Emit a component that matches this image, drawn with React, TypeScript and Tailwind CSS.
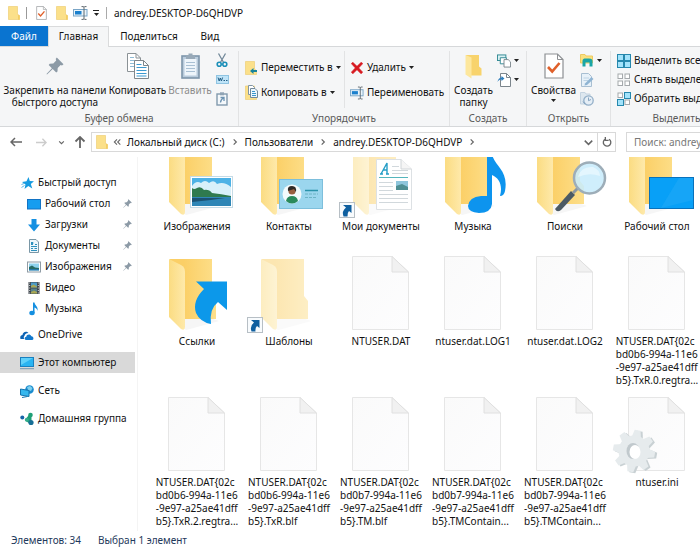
import React from "react";

type Draw = { className?: string };

/* ---------- small icons ---------- */

function MiniFolder({ className }: Draw) {
  return (
    <svg className={className ?? "h-[14px] w-[12px]"} viewBox="0 0 12 14" aria-hidden="true">
      <path d="M0.500 0.500H9.500V8.500L11.500 9.500V13.500H0.500Z" fill="#fbe08a" stroke="#ecc96a" strokeWidth="0.6" />
      <path d="M10 8.500L11.700 9.500V13.700H10Z" fill="#f3cd66" />
    </svg>
  );
}

function CheckDoc({ className }: Draw) {
  return (
    <svg className={className} viewBox="0 0 20 26" aria-hidden="true">
      <path d="M1 1H13.500L19 6.500V25H1Z" fill="#fff" stroke="#8d9093" strokeWidth="1.200" />
      <path d="M13.500 1V6.500H19" fill="none" stroke="#8d9093" />
      <path d="M4 14L8.200 18.500L15.500 10" fill="none" stroke="#e0602a" strokeWidth="2.600" />
    </svg>
  );
}

function RenameIcon({ className }: Draw) {
  return (
    <svg className={className} viewBox="0 0 15 14" aria-hidden="true">
      <rect x="0.500" y="3.500" width="13.500" height="6.500" fill="#e9f4fb" stroke="#7aa5c6" />
      <rect x="2" y="5" width="6.500" height="3.500" fill="#1b80cd" />
      <path d="M8.500 0.600H10.400L11 1.200L11.600 0.600H13.500M11 1V13M8.500 13.400H10.400L11 12.800L11.600 13.400H13.500" fill="none" stroke="#5f686f" />
    </svg>
  );
}

function Pin({ className, color = "#8c9aa6" }: Draw & { color?: string }) {
  return (
    <svg className={className} viewBox="0 0 18 18" aria-hidden="true">
      <path d="M10.800 0.500L17.500 7.200L16 8.400L14.600 7.900L11.700 10.900L11.500 14.600L10.200 15.600L6.700 12.100L1 17.500L0.500 17L5.900 11.300L2.700 8.100L3.700 6.800L7.300 6.500L10.200 3.500L9.700 2Z" fill={color} />
    </svg>
  );
}

function CopyIcon() {
  return (
    <svg className="h-[26px] w-[22px]" viewBox="0 0 22 26" aria-hidden="true">
      <path d="M0.500 0.500H9L13.500 5V18.500H0.500Z" fill="#fff" stroke="#8b9296" />
      <path d="M9 0.500V5H13.500" fill="none" stroke="#8b9296" />
      <path d="M3 4.500H7M3 7.500H11M3 10.500H11M3 13.500H8" fill="none" stroke="#8fbcd6" />
      <path d="M7.500 7.500H16.500L21.500 12.500V25.500H7.500Z" fill="#fff" stroke="#7f878c" />
      <path d="M16.500 7.500V12.500H21.500" fill="none" stroke="#7f878c" />
      <path d="M9.500 11.500H14.500M9.500 14.500H19.500M9.500 17.500H19.500M9.500 20.500H19.500M9.500 23H19.500" stroke="#3d9ad0" />
    </svg>
  );
}

function PasteIcon() {
  return (
    <svg className="h-[26px] w-[19px]" viewBox="0 0 19 26" aria-hidden="true">
      <rect x="1" y="3" width="17" height="22" fill="#b9cbdc" stroke="#7d95ab" strokeWidth="1.600" />
      <rect x="3.500" y="6" width="12" height="16.500" fill="#eef5fb" />
      <path d="M5 9.500H14M5 12.500H14M5 15.500H14M5 18.500H14" stroke="#a9c0d4" />
      <path d="M5 2.500H7.500V0.500H11.500V2.500H14V6H5Z" fill="#98a9b8" />
    </svg>
  );
}

function Scissors() {
  return (
    <svg className="h-[15px] w-[12px]" viewBox="0 0 12 15" aria-hidden="true">
      <path d="M2.500 0.500L7.600 9.500M9.500 0.500L4.400 9.500" stroke="#73899a" strokeWidth="1.300" />
      <circle cx="3.200" cy="11.200" r="2" fill="none" stroke="#1b8fb8" strokeWidth="1.600" />
      <circle cx="8.800" cy="11.200" r="2" fill="none" stroke="#1b8fb8" strokeWidth="1.600" />
    </svg>
  );
}

function CopyPath() {
  return (
    <svg className="h-[9px] w-[13px]" viewBox="0 0 13 9" aria-hidden="true">
      <rect x="0.500" y="0.500" width="12" height="8" fill="#bfe4f8" stroke="#8fc4e2" />
      <path d="M2 2.500L3.200 6L4.300 3L5.400 6L6.600 2.500M7.500 5.500H9M10 5.500H11.500" fill="none" stroke="#245f85" />
    </svg>
  );
}

function PasteShortcut() {
  return (
    <svg className="h-[14px] w-[12px]" viewBox="0 0 12 14" aria-hidden="true">
      <rect x="1" y="2" width="10" height="11" fill="#f4f8fb" stroke="#8199ad" strokeWidth="1.400" />
      <rect x="4" y="0.300" width="4" height="3" fill="#8fa3b4" />
      <path d="M4.500 5.500H8V9M8 5.500C5.500 7 4.500 8.500 4.500 10.500" fill="none" stroke="#6d93b2" strokeWidth="1.300" />
    </svg>
  );
}

function MoveTo() {
  return (
    <svg className="h-[14px] w-[13px]" viewBox="0 0 13 14" aria-hidden="true">
      <path d="M0.500 0.500H9.500V8L11.500 9.500V13.500H0.500Z" fill="#fbe08a" stroke="#ecc96a" strokeWidth="0.600" />
      <path d="M5 10L8.500 7V9H12V11H8.500V13Z" fill="#17849c" />
    </svg>
  );
}

function CopyTo() {
  return (
    <svg className="h-[15px] w-[13px]" viewBox="0 0 13 15" aria-hidden="true">
      <path d="M0.500 1H9.500V10L11.500 11V14.500H0.500Z" fill="#fbe08a" stroke="#ecc96a" strokeWidth="0.600" />
      <path d="M3.500 0.500H7.500L9.500 2.500V9.500H3.500Z" fill="#fff" stroke="#8095a5" />
      <path d="M5.500 3.500H10L12.500 6V12.500H5.500Z" fill="#edf7fd" stroke="#718899" />
      <path d="M7 6.500H10M7 8.500H11M7 10.500H11" stroke="#3b95cb" />
    </svg>
  );
}

function DeleteX() {
  return (
    <svg className="h-[12px] w-[12px]" viewBox="0 0 12 12" aria-hidden="true">
      <path d="M1.800 0.300L6 4.300L10.200 0.300L11.800 1.600L7.700 5.900L11.700 10.200L10 11.800L6 7.700L1.800 11.800L0.300 10.200L4.300 5.900L0.300 1.600Z" fill="#d71920" stroke="#d71920" strokeWidth="0.600" />
    </svg>
  );
}

function NewFolder() {
  return (
    <svg className="h-[25px] w-[18px]" viewBox="0 0 18 25" aria-hidden="true">
      <path d="M1 1H14V12.500L16.500 14.500V21.500H3Z" fill="#f8d36c" />
      <path d="M0.500 1L6.500 3.500V24.500L0.500 20.500Z" fill="#fde79d" />
    </svg>
  );
}

function NewItem() {
  return (
    <svg className="h-[14px] w-[15px]" viewBox="0 0 15 14" aria-hidden="true">
      <rect x="0.500" y="0.500" width="9" height="6" fill="#d9f1f3" stroke="#2f8892" />
      <path d="M3.500 3.500H10V10H3.500Z" fill="#fff" stroke="#2f8892" />
      <path d="M7.500 5.500H12L14.500 8V13.500H7.500Z" fill="#fff" stroke="#7b858c" />
    </svg>
  );
}

function EasyAccess() {
  return (
    <svg className="h-[14px] w-[14px]" viewBox="0 0 14 14" aria-hidden="true">
      <path d="M3.500 0.500H9.500L13.500 4.500V13.500H3.500Z" fill="#fff" stroke="#7b858c" />
      <path d="M9.500 0.500V4.500H13.500" fill="none" stroke="#7b858c" />
      <path d="M0.500 9C1 6.500 2 5 4.500 4.500V3L7.500 5.500L4.500 8V6.500C3 6.500 1.500 7 0.500 9Z" fill="#2e7ebd" />
    </svg>
  );
}

function OpenIcon() {
  return (
    <svg className="h-[13px] w-[14px]" viewBox="0 0 14 13" aria-hidden="true">
      <path d="M0.500 0.500H5L6 2H12.500V9H0.500Z" fill="#fae17f" stroke="#edca62" />
      <path d="M2.500 12.500V7C2.500 5 4 4.500 5.500 4.500H9C11.500 4.500 12.500 5.500 12.500 7V12.500H9.500V8.500H5.500V12.500Z" fill="#19a5a6" />
    </svg>
  );
}

function EditIcon() {
  return (
    <svg className="h-[14px] w-[14px]" viewBox="0 0 14 14" aria-hidden="true">
      <path d="M1.500 0.500H8.500L11.500 3.500V13.500H1.500Z" fill="#e7f1f9" stroke="#a8bfd2" />
      <path d="M3.500 5H9M3.500 7.500H8" stroke="#bdd3e4" />
      <path d="M5 10.500L11.500 4L13.500 6L7 12L4.500 12.500Z" fill="#8fb4d3" />
    </svg>
  );
}

function HistoryIcon() {
  return (
    <svg className="h-[14px] w-[14px]" viewBox="0 0 14 14" aria-hidden="true">
      <path d="M0.500 0.500H5L6 2H10V12H0.500Z" fill="#dde7ef" stroke="#c4d3e0" />
      <circle cx="8.500" cy="8.500" r="4.700" fill="#e5eef6" stroke="#93afc8" strokeWidth="1.300" />
      <path d="M8.500 5.500V8.700L11 7.500M5 12L3 9.500" fill="none" stroke="#86a5c1" />
    </svg>
  );
}

function SelectTiles({ kind }: { kind: "all" | "none" | "invert" }) {
  const cells = [
    [0.5, 0.5],
    [7.5, 0.5],
    [0.5, 7.5],
    [7.5, 7.5],
  ];
  const on = kind === "all" ? [true, true, true, true] : kind === "none" ? [false, false, false, false] : [false, true, true, false];
  return (
    <svg className="h-[14px] w-[14px]" viewBox="0 0 14 14" aria-hidden="true">
      {cells.map(([x, y], i) => (
        <rect
          key={i}
          x={on[i] ? x : x + 0.5}
          y={on[i] ? y : y + 0.5}
          width={on[i] ? 6 : 4.5}
          height={on[i] ? 6 : 4.5}
          fill={on[i] ? "#a3e3fb" : "#fff"}
          stroke={on[i] ? "#2688ad" : "#a5a9ac"}
        />
      ))}
    </svg>
  );
}

function Caret() {
  return (
    <svg className="h-[3px] w-[5px] shrink-0" viewBox="0 0 5 3" aria-hidden="true">
      <path d="M0 0H5L2.500 3Z" fill="#222" />
    </svg>
  );
}

/* ---------- navigation icons ---------- */

function Stroke({ d, color = "#666", w = 1.5, size = "h-3 w-3" }: { d: string; color?: string; w?: number; size?: string }) {
  return (
    <svg className={size} viewBox="0 0 12 12" fill="none" stroke={color} strokeWidth={w} aria-hidden="true">
      <path d={d} />
    </svg>
  );
}

const sideIcons: Record<string, React.ReactNode> = {
  star: (
    <>
      <path d="M8.500 1L9.800 5L14 5.200L10.800 8L12.300 12.500L8.300 10L4.500 13L5.500 8.500L2 6L6.500 5.300Z" fill="#169be0" />
      <path d="M1.500 11.500L4.500 9.500M1.500 8.500L4 7.500" stroke="#5cb9e8" />
    </>
  ),
  desk: <rect x="0.500" y="2.500" width="13" height="9.500" fill="#159df0" stroke="#1273c4" />,
  down: <path d="M4.500 1H9.500V6.500H13L7 13.500L1 6.500H4.500Z" fill="#1590e2" />,
  doc: (
    <>
      <path d="M2.500 0.500H9L11.500 3V13.500H2.500Z" fill="#eef7fb" stroke="#7a97a6" />
      <path d="M4 4H6.500M8 5.500H10M4 7.500H10M4 9.500H6M7.500 9.500H10M4 11.500H10" stroke="#2e90bd" />
      <rect x="4" y="3" width="2" height="3" fill="#2e90bd" />
    </>
  ),
  pic: (
    <>
      <rect x="0.500" y="2" width="13" height="10" fill="#fff" stroke="#8f9ca5" />
      <rect x="2" y="3.500" width="10" height="7" fill="#8ed2ee" />
      <path d="M2 7L5 5.500L8 7.500L12 8V9H2Z" fill="#276b63" />
      <path d="M2 9H12V10.500H2Z" fill="#2679aa" />
    </>
  ),
  video: (
    <>
      <rect x="1.500" y="1" width="11" height="12" fill="#3e454c" />
      <rect x="4" y="1.500" width="6" height="5" fill="#4d9cc7" />
      <rect x="4" y="7.500" width="6" height="5" fill="#56818a" />
      <path d="M4 6.500V5L6.500 3.500L10 5.500V6.500ZM4 12.500V11L7 9.500L10 11V12.500Z" fill="#a9a752" />
      <path d="M2.700 1.500V13M11.300 1.500V13" stroke="#d5dadd" strokeDasharray="1 1.500" />
    </>
  ),
  music: (
    <>
      <path d="M6 0.500H7.500C7.800 3.500 11.500 4.500 10.500 9C10.300 7 9 6 7.500 5.500V11H6Z" fill="#148fe0" />
      <ellipse cx="5" cy="11" rx="2.700" ry="2.200" fill="#148fe0" />
    </>
  ),
  cloud: (
    <>
      <path d="M0.500 11C-0.500 8 1.500 7 2.500 7C2.500 4 6.500 2.500 8.500 5C6 5 4.500 6.500 4.500 8C3.500 8.500 3.500 10.500 4.500 11Z" fill="#0b62b4" />
      <path d="M6 12C4 11.500 4.500 8.800 6.300 8.800C6.500 6 10.500 5.500 11.300 8.300C13.500 8 14.200 11.500 12.300 12Z" fill="#1278cc" />
    </>
  ),
  pc: (
    <>
      <rect x="0.500" y="1.500" width="13" height="9" fill="#29b4f2" stroke="#1a80bf" />
      <path d="M1 2H13L1 9Z" fill="#5fd0fa" />
      <path d="M0 12.700H14" stroke="#7297b0" />
    </>
  ),
  net: (
    <>
      <circle cx="9.500" cy="5.500" r="4.300" fill="#1b8cce" />
      <path d="M7 3L10 2L12.500 4L11 7L8 6Z" fill="#7ed0ef" />
      <path d="M0.500 5L9 6.500V12.500L0.500 11Z" fill="#35b7ee" stroke="#1574ae" />
      <path d="M2 13.500L7.500 12.500" stroke="#1574ae" />
    </>
  ),
  home: (
    <>
      <circle cx="2.300" cy="5.500" r="2" fill="#1764a8" />
      <path d="M7 8L10 4V10Z" fill="#1f9f76" stroke="#1f9f76" strokeWidth="3" strokeLinejoin="round" />
      <circle cx="10.500" cy="3" r="2.300" fill="#1f9f76" />
      <circle cx="11" cy="10.500" r="2.600" fill="#176f96" />
      <circle cx="6.800" cy="7.800" r="2" fill="#35ac8c" />
    </>
  ),
};

/* ---------- large file icons, 92 x 80 canvas ---------- */

function FolderShape({ pale = false }: { pale?: boolean }) {
  return (
    <g opacity={pale ? 0.5 : 1}>
      <path d="M20 66H62L68 68L35 77Z" fill="#eee" opacity="0.500" />
      <path d="M19 6H61V43L65 48V66H28L19 60Z" fill="url(#folderBack)" />
      <path d="M18 6L30 12Q34 14 34 19V74Q34 78 30 76L18 64Z" fill="url(#folderFlap)" />
    </g>
  );
}

function Sheet() {
  return (
    <g>
      <path d="M17.500 3.500H57L73.500 19V76.500H17.500Z" fill="url(#sheetFill)" stroke="#e6e6e6" />
      <path d="M57 3.500V19H73.500Z" fill="#f1f1f1" stroke="#e0e0e0" />
    </g>
  );
}

function LinkBadge() {
  return (
    <g>
      <rect x="4.500" y="64.500" width="15" height="15" fill="#f8fbfd" stroke="#b7bfc5" />
      <path d="M8 67H16.500V75L14 73Q12 75 12.500 78.500H8.500Q6.500 73 11 69.500Z" fill="#0f5f9f" />
    </g>
  );
}

const overlays: Record<string, React.ReactNode> = {
  pictures: (
    <>
      <FolderShape />
      <rect x="39.500" y="38.500" width="42" height="31" fill="#fff" stroke="#c5dbe6" />
      <rect x="41" y="40" width="39" height="28" fill="#4db2e6" />
      <path d="M41 48Q45 42 50 45Q54 41 58 45Q63 41 66 46Q73 43 80 49V58H41Z" fill="#d8f0fa" />
      <path d="M41 50Q43 52 46 50Q50 48 53 52Q58 51 61 55Q70 56 80 58V60H41Z" fill="#2f7a4f" />
      <path d="M41 59H80V68H41Z" fill="#2f86b6" />
      <path d="M41 60H74L60 62L41 64Z" fill="#1b5273" />
    </>
  ),
  contacts: (
    <>
      <FolderShape />
      <rect x="36.500" y="41.500" width="43" height="29" fill="#9bd6ee" stroke="#7dbfdc" />
      <circle cx="49" cy="56" r="9.500" fill="#f4fafc" />
      <path d="M43 63Q44 58 49 58Q54 58 55 63Q49 68 43 63Z" fill="#2a8a5c" />
      <circle cx="49" cy="53" r="3.600" fill="#9a5f40" />
      <path d="M45 53Q44 48 49 48Q54 48 53 54L51 51Z" fill="#2f2a28" />
      <path d="M62 52.500H75" stroke="#2a93ab" strokeWidth="1.500" />
      <path d="M62 56H75M62 59.500H73" stroke="#6cb4c6" strokeDasharray="3 1" />
    </>
  ),
  documents: (
    <>
      <FolderShape pale />
      <path d="M41.500 21.500H66L76.500 31V71.500H41.500Z" fill="#fff" stroke="#dde1e4" />
      <path d="M66 21.500V31H76.500" fill="#f5f5f5" stroke="#d0d5d8" />
      <path d="M45 36H48M51 36H54M46 36L52 25V36M48 32H52" fill="none" stroke="#249dc6" strokeWidth="1.400" />
      <path d="M44 39.500H73" stroke="#54b6bd" />
      <rect x="61" y="43" width="12" height="9" fill="#8ec6dc" />
      <path d="M61 48L67 46L73 49V52H61Z" fill="#4f8f93" />
      <path d="M57 28.500H64M57 32.500H73M57 35.500H73M44 44.500H58M44 48.500H58M44 52.500H58M44 56.500H73M44 60.500H73M44 64.500H73" stroke="#d1d8dc" />
      <LinkBadge />
    </>
  ),
  music: (
    <>
      <FolderShape />
      <path d="M60 16H65C67 28 82 32 78 53Q77 58 73 58C76 47 72 40 65 37V66Q64 75 52 75Q41 74 41 68Q42 59 54 58H60Z" fill="#0d94ee" />
    </>
  ),
  search: (
    <>
      <FolderShape />
      <path d="M52 53L56 57L42 72Q38 75 36 71Z" fill="#4c5a64" />
      <path d="M54 55L60 49" stroke="#8d98a0" strokeWidth="3" />
      <circle cx="70.500" cy="40" r="15.500" fill="#c8ecfb" fillOpacity="0.870" stroke="#9dadb8" strokeWidth="2.500" />
      <path d="M59 39Q62 28 74 29Q81 32 81 38Q70 34 59 39Z" fill="#ecfaff" opacity="0.700" />
    </>
  ),
  desktop: (
    <>
      <FolderShape />
      <rect x="38.500" y="39.500" width="44" height="31" fill="#08a0f7" stroke="#0872bd" />
      <path d="M68 40H82V62L50 70Z" fill="#37b4fa" opacity="0.300" />
    </>
  ),
  links: (
    <>
      <FolderShape />
      <path d="M45 28.500H76V57L67 49Q58 56 60 71Q49 69 45 60Q41 48 53 36Z" fill="#0c98ea" />
    </>
  ),
  templates: (
    <>
      <FolderShape pale />
      <LinkBadge />
    </>
  ),
  file: <Sheet />,
  ini: (
    <>
      <Sheet />
      <g transform="translate(23 57)">
        <g fill="#c9d1d4" transform="translate(2 1)">
          {[10, 55, 100, 145, 190, 235, 280, 325].map((a) => (
            <path key={a} d="M-3 -21H3L5 -12H-5Z" transform={`rotate(${a})`} />
          ))}
        </g>
        <g fill="#e6ebed">
          {[10, 55, 100, 145, 190, 235, 280, 325].map((a) => (
            <path key={a} d="M-3 -21H3L5 -12H-5Z" transform={`rotate(${a})`} />
          ))}
          <circle r="15.500" />
        </g>
        <ellipse cx="-1" cy="0" rx="6.500" ry="8" fill="#c1c9cd" />
        <ellipse cx="1" cy="1" rx="5.500" ry="7" fill="#fff" />
      </g>
    </>
  ),
};

const entries: { art: string; name: string[] }[] = [
  { art: "pictures", name: ["Изображения"] },
  { art: "contacts", name: ["Контакты"] },
  { art: "documents", name: ["Мои документы"] },
  { art: "music", name: ["Музыка"] },
  { art: "search", name: ["Поиски"] },
  { art: "desktop", name: ["Рабочий стол"] },
  { art: "links", name: ["Ссылки"] },
  { art: "templates", name: ["Шаблоны"] },
  { art: "file", name: ["NTUSER.DAT"] },
  { art: "file", name: ["ntuser.dat.LOG1"] },
  { art: "file", name: ["ntuser.dat.LOG2"] },
  { art: "file", name: ["NTUSER.DAT{02c", "bd0b6-994a-11e6", "-9e97-a25ae41dff", "b5}.TxR.0.regtra..."] },
  { art: "file", name: ["NTUSER.DAT{02c", "bd0b6-994a-11e6", "-9e97-a25ae41dff", "b5}.TxR.2.regtra..."] },
  { art: "file", name: ["NTUSER.DAT{02c", "bd0b6-994a-11e6", "-9e97-a25ae41dff", "b5}.TxR.blf"] },
  { art: "file", name: ["NTUSER.DAT{02c", "bd0b7-994a-11e6", "-9e97-a25ae41dff", "b5}.TM.blf"] },
  { art: "file", name: ["NTUSER.DAT{02c", "bd0b7-994a-11e6", "-9e97-a25ae41dff", "b5}.TMContain..."] },
  { art: "file", name: ["NTUSER.DAT{02c", "bd0b7-994a-11e6", "-9e97-a25ae41dff", "b5}.TMContain..."] },
  { art: "ini", name: ["ntuser.ini"] },
];

/* ---------- ribbon pieces ---------- */

function Group({ title, width, children }: { title: string; width: string; children: React.ReactNode }) {
  return (
    <section className={`${width} flex shrink-0 flex-col border-r border-[#e2e3e4]`}>
      <div className="flex h-[61px] items-start">{children}</div>
      <h2 className="text-center leading-[13px] text-[#5a5a5a]">{title}</h2>
    </section>
  );
}

function BigButton({ icon, lines, width, muted, caret }: { icon: React.ReactNode; lines: string[]; width: string; muted?: boolean; caret?: boolean }) {
  return (
    <button className={`${width} flex shrink-0 flex-col items-center whitespace-nowrap leading-3 ${muted ? "text-[#8c8c8c]" : ""}`}>
      <span className="mb-[3px] flex h-[30px] items-center">{icon}</span>
      {lines.map((l) => (
        <span key={l}>{l}</span>
      ))}
      {caret && (
        <span className="flex h-[9px] items-center">
          <Caret />
        </span>
      )}
    </button>
  );
}

function SmallButton({ icon, text, caret, label }: { icon: React.ReactNode; text?: string; caret?: boolean; label?: string }) {
  return (
    <button aria-label={label} className="flex h-[19px] items-center gap-[3px] whitespace-nowrap">
      <span className="flex w-[14px] shrink-0 justify-center">{icon}</span>
      {text}
      {caret && <Caret />}
    </button>
  );
}

function SideItem({ icon, text, nested, pinned, active }: { icon: string; text: string; nested?: boolean; pinned?: boolean; active?: boolean }) {
  return (
    <li>
      <a href="#" className={`flex h-[21px] items-center gap-1 whitespace-nowrap pr-[3px] ${nested ? "pl-[27px]" : "pl-5"} ${active ? "bg-[#d9d9d9]" : ""}`}>
        <svg className="h-[14px] w-[14px] shrink-0" viewBox="0 0 14 14" aria-hidden="true">
          {sideIcons[icon]}
        </svg>
        <span>{text}</span>
        {pinned && <Pin className="ml-auto h-[9px] w-[9px] shrink-0" />}
      </a>
    </li>
  );
}

function Crumb({ text }: { text: string }) {
  return (
    <>
      <a href="#" className="whitespace-nowrap">
        {text}
      </a>
      <Stroke d="M4 2L8 6L4 10" w={1.8} size="mx-[6px] h-[8px] w-[8px] shrink-0" />
    </>
  );
}

export default function App() {
  return (
    <div className="flex h-screen flex-col overflow-hidden bg-white font-['Noto_Sans','Open_Sans',sans-serif] text-[10px] leading-[13px] text-[#111]">
      <svg className="absolute h-0 w-0" aria-hidden="true">
        <defs>
          <linearGradient id="folderBack" x1="0" x2="1">
            <stop offset="0.300" stopColor="#fbcf66" />
            <stop offset="1" stopColor="#fddf8b" />
          </linearGradient>
          <linearGradient id="folderFlap" x1="0" x2="1">
            <stop offset="0" stopColor="#fbdc82" />
            <stop offset="1" stopColor="#fee9aa" />
          </linearGradient>
          <linearGradient id="sheetFill" x1="0" x2="1" y2="1">
            <stop offset="0" stopColor="#fafafa" />
            <stop offset="1" stopColor="#fdfdfe" />
          </linearGradient>
        </defs>
      </svg>

      <header className="flex h-[26px] shrink-0 items-center pl-2">
        <MiniFolder />
        <span className="ml-[6px] mr-[9px] h-3 w-px bg-[#999]" />
        <button aria-label="Свойства">
          <CheckDoc className="h-[14px] w-[11px]" />
        </button>
        <button aria-label="Новая папка" className="ml-[9px]">
          <MiniFolder />
        </button>
        <button aria-label="Переименовать" className="ml-[5px]">
          <RenameIcon className="h-[14px] w-[15px]" />
        </button>
        <button aria-label="Настройка панели" className="ml-[5px] flex flex-col items-center gap-[2px]">
          <span className="h-px w-[6px] bg-[#222]" />
          <Caret />
        </button>
        <span className="mx-[7px] h-3 w-px bg-[#aaa]" />
        <h1 className="whitespace-nowrap">andrey.DESKTOP-D6QHDVP</h1>
      </header>

      <nav className="flex h-5 shrink-0">
        <button className="w-12 bg-[#0a74d0] text-white">Файл</button>
        <button className="z-10 -mb-px w-[61px] border border-b-0 border-[#dadbdc] bg-[#f5f6f7] pb-[2px]">Главная</button>
        <button className="w-20">Поделиться</button>
        <button className="w-[42px]">Вид</button>
      </nav>

      <div className="flex h-[81px] shrink-0 overflow-hidden border-y border-[#d6d8da] bg-[#f5f6f7] pt-1">
        <Group title="Буфер обмена" width="w-[239px]">
          <BigButton width="w-[110px]" icon={<Pin className="h-[18px] w-[18px]" />} lines={["Закрепить на панели", "быстрого доступа"]} />
          <BigButton width="w-[55px]" icon={<CopyIcon />} lines={["Копировать"]} />
          <BigButton width="w-[50px]" icon={<PasteIcon />} lines={["Вставить"]} muted />
          <div className="flex flex-col">
            <SmallButton label="Вырезать" icon={<Scissors />} />
            <SmallButton label="Скопировать путь" icon={<CopyPath />} />
            <SmallButton label="Вставить ярлык" icon={<PasteShortcut />} />
          </div>
        </Group>
        <Group title="Упорядочить" width="w-[211px]">
          <div className="flex h-[57px] w-[106px] shrink-0 flex-col gap-[6px] border-r border-[#e2e3e4] pl-[5px] pt-[7px]">
            <SmallButton icon={<MoveTo />} text="Переместить в" caret />
            <SmallButton icon={<CopyTo />} text="Копировать в" caret />
          </div>
          <div className="flex flex-col gap-[6px] pl-[5px] pt-[7px]">
            <SmallButton icon={<DeleteX />} text="Удалить" caret />
            <SmallButton icon={<RenameIcon className="h-[14px] w-[14px]" />} text="Переименовать" />
          </div>
        </Group>
        <Group title="Создать" width="w-[77px]">
          <BigButton width="w-[47px]" icon={<NewFolder />} lines={["Создать", "папку"]} />
          <div className="flex flex-col">
            <SmallButton label="Создать элемент" icon={<NewItem />} caret />
            <SmallButton label="Простой доступ" icon={<EasyAccess />} caret />
          </div>
        </Group>
        <Group title="Открыть" width="w-[84px]">
          <BigButton width="w-[53px]" icon={<CheckDoc className="h-[26px] w-[20px]" />} lines={["Свойства"]} caret />
          <div className="flex flex-col">
            <SmallButton label="Открыть" icon={<OpenIcon />} caret />
            <SmallButton label="Изменить" icon={<EditIcon />} />
            <SmallButton label="Журнал" icon={<HistoryIcon />} />
          </div>
        </Group>
        <Group title="Выделить" width="w-[132px]">
          <div className="flex flex-col pl-[6px]">
            <SmallButton icon={<SelectTiles kind="all" />} text="Выделить все" />
            <SmallButton icon={<SelectTiles kind="none" />} text="Снять выделение" />
            <SmallButton icon={<SelectTiles kind="invert" />} text="Обратить выделение" />
          </div>
        </Group>
      </div>

      <div className="flex h-[30px] shrink-0 items-center">
        <div className="flex w-[91px] shrink-0 items-center pl-[10px]">
          <button aria-label="Назад">
            <Stroke d="M12 6H1M5 2L1 6L5 10" />
          </button>
          <button aria-label="Вперёд" className="ml-[14px]">
            <Stroke d="M0 6H11M7 2L11 6L7 10" color="#ccc" size="h-[11px] w-[11px]" />
          </button>
          <button aria-label="Последние" className="ml-[11px]">
            <Stroke d="M2 4L6 8L10 4" w={2} size="h-[7px] w-[7px]" />
          </button>
          <button aria-label="Вверх" className="ml-[9px]">
            <Stroke d="M6 12V1M1.500 5.500L6 1L10.500 5.500" w={1.8} />
          </button>
        </div>
        <div className="flex h-5 min-w-0 flex-1 items-center border border-[#d9d9d9] pl-1">
          <MiniFolder />
          <Stroke d="M6 2L2 6L6 10M11 2L7 6L11 10" w={1.6} size="ml-[5px] mr-[6px] h-[8px] w-[8px] shrink-0" />
          <Crumb text="Локальный диск (C:)" />
          <Crumb text="Пользователи" />
          <Crumb text="andrey.DESKTOP-D6QHDVP" />
          <button aria-label="Предыдущие расположения" className="ml-auto flex h-full w-[18px] items-center justify-center border-r border-[#d9d9d9]">
            <Stroke d="M1 3.500L6 8.500L11 3.500" w={2} size="h-[9px] w-[9px]" />
          </button>
          <button aria-label="Обновить" className="flex h-full w-[17px] items-center justify-center">
            <Stroke d="M4 2.500A4.500 4.500 0 1 0 8.500 2.700M4 0V4H8" w={1.6} size="h-[10px] w-[10px]" />
          </button>
        </div>
        <div className="ml-[10px] w-[74px] shrink-0 overflow-hidden">
          <input
            aria-label="Поиск"
            placeholder="Поиск: andrey.DESKTOP-D6QHDVP"
            className="h-5 w-[200px] border border-[#d9d9d9] px-[7px] outline-none placeholder:text-[#777]"
          />
        </div>
      </div>

      <div className="flex min-h-0 flex-1">
        <aside className="w-[138px] shrink-0 border-r border-[#f4f4f4] pr-[2px] pt-[15px]">
          <ul className="flex flex-col">
            <SideItem icon="star" text="Быстрый доступ" />
            <SideItem icon="desk" text="Рабочий стол" nested pinned />
            <SideItem icon="down" text="Загрузки" nested pinned />
            <SideItem icon="doc" text="Документы" nested pinned />
            <SideItem icon="pic" text="Изображения" nested pinned />
            <SideItem icon="video" text="Видео" nested />
            <SideItem icon="music" text="Музыка" nested />
          </ul>
          <ul className="mt-[5px] flex flex-col gap-[7px]">
            <SideItem icon="cloud" text="OneDrive" />
            <SideItem icon="pc" text="Этот компьютер" active />
            <SideItem icon="net" text="Сеть" />
            <SideItem icon="home" text="Домашняя группа" />
          </ul>
        </aside>
        <main className="min-w-0 flex-1 overflow-hidden pl-[13px]">
          <div className="-mt-[19px] grid grid-cols-[repeat(6,minmax(92px,1fr))]">
            {entries.map((e, i) => (
              <button key={i} className="flex min-h-[115px] flex-col items-center pb-[7px]">
                <svg className="h-20 w-[92px] shrink-0" viewBox="0 0 92 80" aria-hidden="true">
                  {overlays[e.art]}
                </svg>
                <span className="mt-[2px] whitespace-nowrap text-left">
                  {e.name.map((l) => (
                    <span key={l} className="block">
                      {l}
                    </span>
                  ))}
                </span>
              </button>
            ))}
          </div>
        </main>
      </div>

      <footer className="flex h-[19px] shrink-0 items-center gap-[17px] whitespace-nowrap pl-[11px] text-[#1e395b]">
        <span>Элементов: 34</span>
        <span>Выбран 1 элемент</span>
      </footer>
    </div>
  );
}
